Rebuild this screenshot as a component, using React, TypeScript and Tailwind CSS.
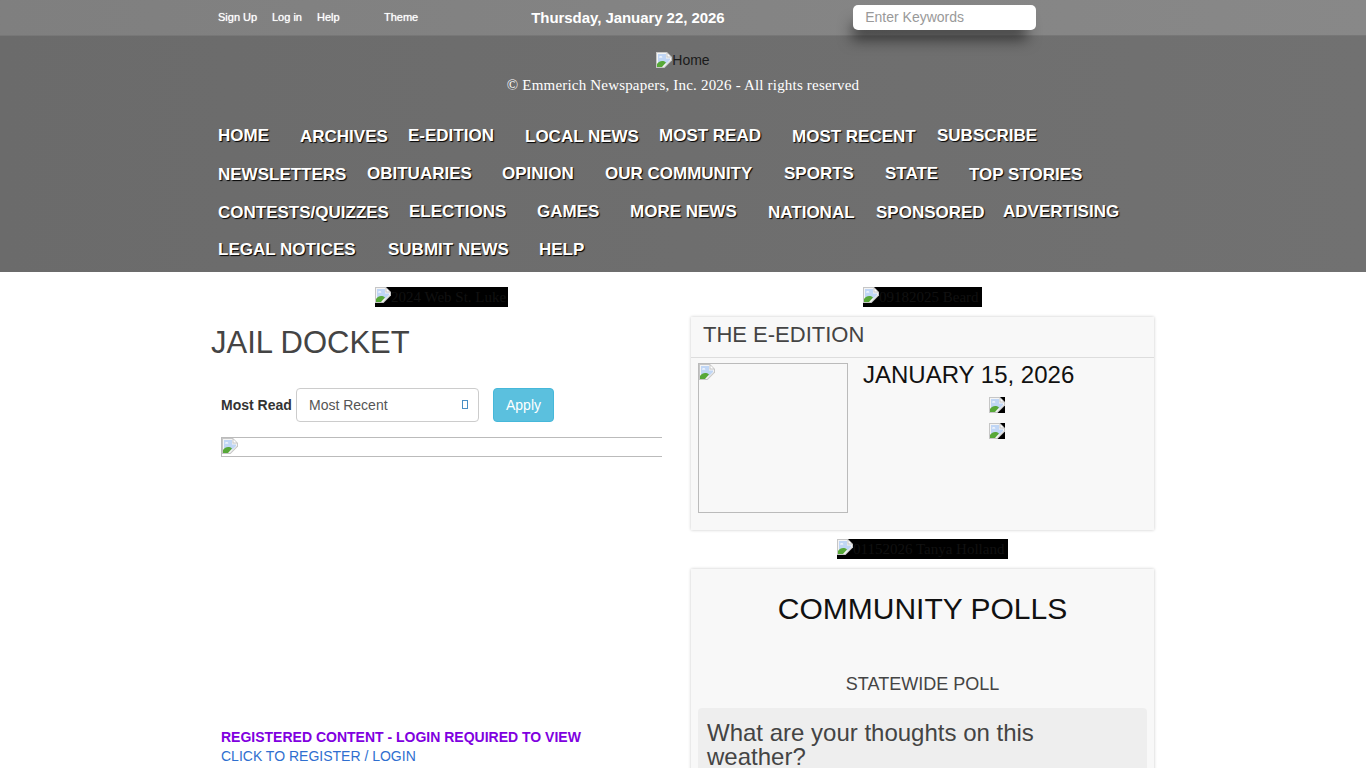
const Broken = ({ className = "" }: { className?: string }) => (
  <svg width="16" height="16" viewBox="0 0 16 16" className={"shrink-0 block " + className}>
    <path d="M0 0H11L16 5V8.5L8.5 16H0Z" fill="#c6c6c6" />
    <path d="M1 1H10.5V5.5H15V8L8 15H1Z" fill="#f4f4f4" />
    <path d="M11.5 1.5L14.5 4.5H11.5Z" fill="#fff" />
    <path d="M2 2H10V6.5H14V8L10.5 11.5H2Z" fill="#c0d6f5" />
    <path d="M1 15V12C3 9 7 8 10 10.5L6 15Z" fill="#57a838" />
    <path d="M3 5.5a1.6 1.2 0 0 1 3.4 0Z" fill="#fff" />
  </svg>
);

type Item = { t: string; c: string };
const rows: Item[][] = [
  [
    { t: "HOME", c: "w-[82px]" },
    { t: "ARCHIVES", c: "w-[108px] mt-px" },
    { t: "E-EDITION", c: "w-[117px]" },
    { t: "LOCAL NEWS", c: "w-[134px] mt-px" },
    { t: "MOST READ", c: "w-[133px]" },
    { t: "MOST RECENT", c: "w-[145px] mt-px" },
    { t: "SUBSCRIBE", c: "" },
  ],
  [
    { t: "NEWSLETTERS", c: "w-[149px] mt-px" },
    { t: "OBITUARIES", c: "w-[135px]" },
    { t: "OPINION", c: "w-[103px]" },
    { t: "OUR COMMUNITY", c: "w-[179px]" },
    { t: "SPORTS", c: "w-[101px]" },
    { t: "STATE", c: "w-[84px]" },
    { t: "TOP STORIES", c: "mt-px" },
  ],
  [
    { t: "CONTESTS/QUIZZES", c: "w-[191px] mt-px" },
    { t: "ELECTIONS", c: "w-[128px]" },
    { t: "GAMES", c: "w-[93px]" },
    { t: "MORE NEWS", c: "w-[138px]" },
    { t: "NATIONAL", c: "w-[108px] mt-px" },
    { t: "SPONSORED", c: "w-[127px] mt-px" },
    { t: "ADVERTISING", c: "" },
  ],
  [
    { t: "LEGAL NOTICES", c: "w-[170px]" },
    { t: "SUBMIT NEWS", c: "w-[151px]" },
    { t: "HELP", c: "" },
  ],
];

const Ad = ({ text }: { text: string }) => (
  <div className="flex h-5 bg-black text-[#111] font-['Liberation_Serif',serif] text-[15px] leading-5 overflow-hidden whitespace-nowrap">
    <Broken />
    <span>{text}</span>
  </div>
);

export default function App() {
  return (
    <div className="h-screen overflow-hidden bg-white font-['Liberation_Sans',Arial,sans-serif] text-[14px] text-[#444]">
      <header className="h-[272px] bg-gradient-to-r from-[#6b6b6b] to-[#717171]">
        <div className="h-9 bg-gradient-to-r from-[#7f7f7f] to-[#888888] border-b border-[#777]">
          <div className="w-[970px] mx-auto pl-5 flex items-center h-[34px] relative">
            <div className="flex text-[11px] text-white [text-shadow:0_0_1px_#eee] leading-none">
              <span className="w-[54px]">Sign Up</span>
              <span className="w-[45px]">Log in</span>
              <span className="w-[67px]">Help</span>
              <span>Theme</span>
            </div>
            <div className="ml-[113px] w-[194px] font-bold text-white text-[15px] tracking-[-0.06px] leading-none whitespace-nowrap">Thursday, January 22, 2026</div>
            <div className="ml-[128px] w-[183px] h-[25px] bg-white rounded-[5px] pl-3 flex items-center text-[14px] text-[#999] shadow-[-5px_14px_14px_-4px_rgba(0,0,0,0.5)]">
              Enter Keywords
            </div>
          </div>
        </div>
        <div className="w-[970px] mx-auto">
          <div className="flex justify-center items-center pt-[9px] h-[39px] text-[14px] text-[#1a1a1a]">
            <Broken />
            <span>Home</span>
          </div>
          <div className="text-center text-white font-['Liberation_Serif',serif] text-[15px] tracking-[0.19px] leading-[18px] mt-px">
            © Emmerich Newspapers, Inc. 2026 - All rights reserved
          </div>
          <nav className="mt-[32px] pl-5">
            {rows.map((r, i) => (
              <div key={i} className="flex h-[38px] items-start">
                {r.map((it) => (
                  <span
                    key={it.t}
                    className={"font-bold text-[17px] leading-[20px] text-white whitespace-nowrap shrink-0 [text-shadow:1px_1px_1px_#000] " + it.c}
                  >
                    {it.t}
                  </span>
                ))}
              </div>
            ))}
          </nav>
        </div>
      </header>

      <main className="w-[970px] mx-auto flex pt-[15px]">
        <section className="w-[493px] shrink-0">
          <div className="flex justify-center pl-[7px] w-[480px]">
            <div className="w-[133px]">
              <Ad text="2024 Web St. Luke" />
            </div>
          </div>
          <h1 className="pl-[13px] mt-[18px] text-[31px] leading-9 font-normal text-[#444]">JAIL DOCKET</h1>
          <div className="mt-[27px] pl-[23px] flex items-center h-[34px]">
            <span className="font-bold text-[#333] w-[75px]">Most Read</span>
            <div className="w-[183px] h-[34px] border border-[#ccc] rounded flex items-center justify-between pl-3 pr-[10px] text-[#555]">
              Most Recent
              <span className="w-[6px] h-[9px] border border-[#4a8fc4] -mt-px" />
            </div>
            <div className="ml-[14px] w-[61px] h-[34px] rounded bg-[#5bc0de] border border-[#46b8da] text-white flex items-center justify-center">Apply</div>
          </div>
          <div className="ml-[23px] mt-[15px] h-5 w-[441px] border-l border-t border-b border-[#bbb]">
            <Broken />
          </div>
          <div className="pl-[23px] mt-[271px] leading-[19px]">
            <div className="font-bold text-[#8000e0]">REGISTERED CONTENT - LOGIN REQUIRED TO VIEW</div>
            <div className="text-[#2f6fd0]">CLICK TO REGISTER / LOGIN</div>
          </div>
        </section>

        <aside className="w-[463px] shrink-0">
          <div className="flex justify-center">
            <div className="w-[119px]">
              <Ad text="09182025 Beard" />
            </div>
          </div>
          <div className="mt-[10px] h-[213px] bg-[#f8f8f8] shadow-[0_0_3px_rgba(0,0,0,0.22)]">
            <div className="h-[41px] border-b border-[#ddd] pl-3 pt-[4px] text-[22px] leading-[28px] text-[#444]">THE E-EDITION</div>
            <div className="flex pl-[7px] pt-[5px]">
              <div className="w-[150px] h-[150px] border border-[#bbb]">
                <Broken />
              </div>
              <div className="ml-[15px] flex-1 pr-[8px]">
                <div className="text-[24px] leading-[24px] text-[#111]">JANUARY 15, 2026</div>
                <div className="w-[268px] flex flex-col items-center gap-[10px] mt-[10px]">
                  <Broken className="bg-black" />
                  <Broken className="bg-black" />
                </div>
              </div>
            </div>
          </div>
          <div className="flex justify-center mt-[9px]">
            <div className="w-[171px]">
              <Ad text="01152026 Tanya Holland" />
            </div>
          </div>
          <div className="mt-[10px] h-[400px] bg-[#f8f8f8] shadow-[0_0_3px_rgba(0,0,0,0.22)] px-[7px] text-center">
            <div className="pt-[20px] text-[30px] leading-[40px] text-[#111]">COMMUNITY POLLS</div>
            <div className="mt-[45px] text-[18px] leading-5 text-[#444]">STATEWIDE POLL</div>
            <div className="mt-[14px] bg-[#eeeeee] rounded-sm pl-[9px] pr-3 pt-[13px] text-left text-[24px] leading-[24px] text-[#444] h-[200px]">
              What are your thoughts on this weather?
            </div>
          </div>
        </aside>
      </main>
    </div>
  );
}
